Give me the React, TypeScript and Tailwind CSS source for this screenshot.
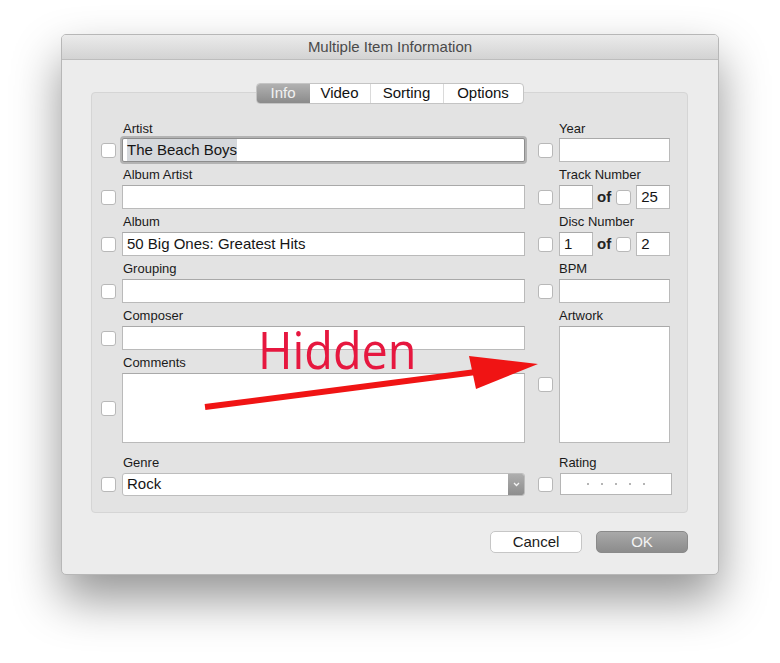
import React from "react";

const font = { fontFamily: '"Liberation Sans", Arial, sans-serif' };

function Check({ className = "" }: { className?: string }) {
  return (
    <div
      className={`w-[15px] h-[15px] shrink-0 rounded-[3px] bg-white border border-[#b8b8b8] shadow-[inset_0_1px_0_#ffffff] ${className}`}
    />
  );
}

function Field({ value, className = "" }: { value?: string; className?: string }) {
  return (
    <div
      className={`h-[24px] bg-white border border-[#bababa] border-t-[#a9a9a9] flex items-center pl-[4px] text-[15px] text-[#151515] ${className}`}
    >
      {value}
    </div>
  );
}

function Label({ text, right = false }: { text: string; right?: boolean }) {
  return (
    <div className={`h-[14px] leading-[15px] text-[13px] text-[#1a1a1a] ${right ? "pl-[21px]" : "pl-[22px]"}`}>
      {text}
    </div>
  );
}

export default function App() {
  return (
    <div className="relative w-[780px] h-[663px] bg-white pt-[34px] pl-[61px] overflow-hidden" style={font}>
      <div className="w-[658px] h-[541px] rounded-[5px] bg-[#ececec] border border-[#b7b7b7] shadow-[0_24px_48px_rgba(0,0,0,0.42)] flex flex-col">
        {/* title bar */}
        <div className="h-[25px] shrink-0 rounded-t-[4px] bg-gradient-to-b from-[#ebebeb] to-[#d3d3d3] border-b border-[#bdbdbd] flex items-center justify-center text-[15px] text-[#4a4a4a]">
          Multiple Item Information
        </div>

        <div className="flex flex-col pt-[23px]">
          {/* tabs */}
          <div className="relative z-10 self-center flex h-[21px] rounded-[4px] border border-[#c4c4c4] bg-white overflow-hidden text-[15px] text-[#111] -ml-[1px]">
            <div className="w-[53px] flex items-center justify-center bg-gradient-to-b from-[#b1b1b1] to-[#8b8b8b] text-[#f2f2f2]">Info</div>
            <div className="w-[61px] flex items-center justify-center border-r border-[#dadada]">Video</div>
            <div className="w-[73px] flex items-center justify-center border-r border-[#dadada]">Sorting</div>
            <div className="w-[79px] flex items-center justify-center">Options</div>
          </div>

          {/* group box */}
          <div className="-mt-[12px] ml-[29px] w-[597px] h-[421px] rounded-[4px] bg-[#e3e3e3] border border-[#d5d5d5] pt-[28px] pl-[9px] flex gap-[13px]">
            {/* left column */}
            <div className="w-[424px] flex flex-col">
              <Label text="Artist" />
              <div className="flex items-center gap-[6px] mt-[3px]">
                <Check />
                <div className="flex-1 h-[24px] bg-white border border-[#8d8d8d] rounded-[2px] shadow-[0_0_0_2px_#b3b3b3] flex items-center pl-[4px] text-[15px] text-[#151515]">
                  <span className="bg-[#d5d8dc]">The Beach Boys</span>
                </div>
              </div>

              <div className="mt-[5px]"><Label text="Album Artist" /></div>
              <div className="flex items-center gap-[6px] mt-[4px]">
                <Check />
                <Field className="flex-1" />
              </div>

              <div className="mt-[5px]"><Label text="Album" /></div>
              <div className="flex items-center gap-[6px] mt-[4px]">
                <Check />
                <Field className="flex-1" value="50 Big Ones: Greatest Hits" />
              </div>

              <div className="mt-[5px]"><Label text="Grouping" /></div>
              <div className="flex items-center gap-[6px] mt-[4px]">
                <Check />
                <Field className="flex-1" />
              </div>

              <div className="mt-[5px]"><Label text="Composer" /></div>
              <div className="flex items-center gap-[6px] mt-[4px]">
                <Check />
                <Field className="flex-1" />
              </div>

              <div className="mt-[5px]"><Label text="Comments" /></div>
              <div className="flex items-center gap-[6px] mt-[4px]">
                <Check />
                <div className="flex-1 h-[70px] bg-white border border-[#bababa] border-t-[#a9a9a9]" />
              </div>

              <div className="mt-[12px]"><Label text="Genre" /></div>
              <div className="flex items-center gap-[6px] mt-[4px]">
                <Check />
                <div className="flex-1 h-[23px] flex rounded-[3px] border border-[#bdbdbd] bg-white overflow-hidden">
                  <div className="flex-1 flex items-center pl-[4px] text-[15px] text-[#151515]">Rock</div>
                  <div className="w-[16px] flex items-center justify-center bg-gradient-to-b from-[#aeaeae] to-[#8e8e8e]">
                    <svg width="7" height="5" viewBox="0 0 7 5">
                      <path d="M1 1 L3.5 3.5 L6 1" stroke="#f5f5f5" strokeWidth="1.3" fill="none" />
                    </svg>
                  </div>
                </div>
              </div>
            </div>

            {/* right column */}
            <div className="w-[134px] flex flex-col">
              <Label text="Year" right />
              <div className="flex items-center gap-[6px] mt-[3px]">
                <Check />
                <Field className="w-[111px]" />
              </div>

              <div className="mt-[5px]"><Label text="Track Number" right /></div>
              <div className="flex items-center mt-[4px]">
                <Check />
                <Field className="w-[34px] ml-[6px]" />
                <span className="ml-[4px] text-[15px] font-bold text-[#222]">of</span>
                <Check className="ml-[5px]" />
                <Field className="w-[34px] ml-[5px]" value="25" />
              </div>

              <div className="mt-[5px]"><Label text="Disc Number" right /></div>
              <div className="flex items-center mt-[4px]">
                <Check />
                <Field className="w-[34px] ml-[6px]" value="1" />
                <span className="ml-[4px] text-[15px] font-bold text-[#222]">of</span>
                <Check className="ml-[5px]" />
                <Field className="w-[34px] ml-[5px]" value="2" />
              </div>

              <div className="mt-[5px]"><Label text="BPM" right /></div>
              <div className="flex items-center gap-[6px] mt-[4px]">
                <Check />
                <Field className="w-[111px]" />
              </div>

              <div className="mt-[5px]"><Label text="Artwork" right /></div>
              <div className="flex items-center gap-[6px] mt-[4px]">
                <Check />
                <div className="w-[111px] h-[117px] bg-white border border-[#bababa] border-t-[#a9a9a9]" />
              </div>

              <div className="mt-[12px]"><Label text="Rating" right /></div>
              <div className="flex items-center gap-[7px] mt-[4px]">
                <Check />
                <div className="w-[112px] h-[22px] bg-white border border-[#b5b5b5] flex items-center justify-center gap-[12px]">
                  <span className="w-[2px] h-[2px] rounded-full bg-[#9c9c9c]" />
                  <span className="w-[2px] h-[2px] rounded-full bg-[#9c9c9c]" />
                  <span className="w-[2px] h-[2px] rounded-full bg-[#9c9c9c]" />
                  <span className="w-[2px] h-[2px] rounded-full bg-[#9c9c9c]" />
                  <span className="w-[2px] h-[2px] rounded-full bg-[#9c9c9c]" />
                </div>
              </div>
            </div>
          </div>

          {/* buttons */}
          <div className="flex justify-end gap-[14px] mt-[18px] pr-[30px]">
            <div className="w-[92px] h-[22px] rounded-[5px] bg-white border border-[#c6c6c6] flex items-center justify-center text-[15px] text-[#1a1a1a]">
              Cancel
            </div>
            <div className="w-[92px] h-[22px] rounded-[5px] bg-gradient-to-b from-[#a9a9a9] to-[#8c8c8c] border border-[#8a8a8a] flex items-center justify-center text-[15px] text-[#f3f3f3]">
              OK
            </div>
          </div>
        </div>
      </div>

      {/* annotation overlay */}
      <div
        className="absolute left-[258px] top-[323px] text-[52px] leading-[52px] text-[#e6173f] origin-left scale-x-[0.9]"
        style={{ fontFamily: '"Open Sans", "Liberation Sans", sans-serif' }}
      >
        Hidden
      </div>
      <svg className="absolute left-0 top-0" width="780" height="663" viewBox="0 0 780 663">
        <line x1="205" y1="407" x2="476" y2="372" stroke="#f01414" strokeWidth="6" />
        <polygon points="469,356 538,364 476,389" fill="#f01414" />
      </svg>
    </div>
  );
}
